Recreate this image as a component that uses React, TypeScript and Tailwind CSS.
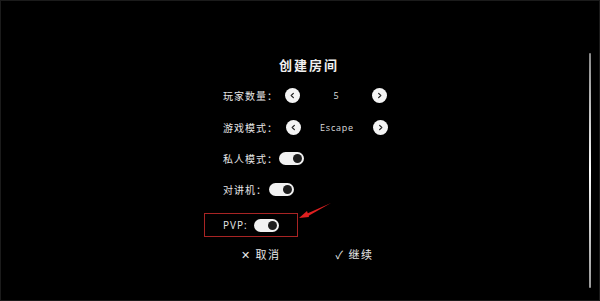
import React from "react";

const font = { fontFamily: '"Noto Sans CJK SC", "Noto Sans", sans-serif' };

function Toggle() {
  return (
    <div className="w-[25px] h-[13px] rounded-full bg-[#f2f2f2] flex items-center justify-end pr-[2px]">
      <div className="w-[9px] h-[9px] rounded-full bg-[#1e1e1e]" />
    </div>
  );
}

function Arrow({ dir }: { dir: "l" | "r" }) {
  return (
    <div className="w-[15px] h-[15px] rounded-full bg-[#f4f4f4] flex items-center justify-center">
      <svg width="7" height="7" viewBox="0 0 8 8">
        <path
          d={dir === "l" ? "M5 1.5 L2.5 4 L5 6.5" : "M3 1.5 L5.5 4 L3 6.5"}
          fill="none"
          stroke="#222"
          strokeWidth="1.4"
          strokeLinecap="round"
          strokeLinejoin="round"
        />
      </svg>
    </div>
  );
}

function Label({ children }: { children: React.ReactNode }) {
  return <span className="text-[10px] tracking-[1px] text-[#e6e6e6] leading-none">{children}</span>;
}

export default function App() {
  return (
    <div className="relative w-[600px] h-[301px] bg-black border border-[#1b1b1b] overflow-hidden" style={font}>
      <div className="flex flex-col pt-[54px] pl-[203px]">
        <div className="pl-[75px] h-[18px] flex items-center">
          <span className="text-[13px] font-bold tracking-[2px] text-[#f0f0f0] leading-none">创建房间</span>
        </div>

        <div className="flex items-center h-[15px] mt-[15px] pl-[19px]">
          <Label>玩家数量：</Label>
          <div className="ml-[7px]"><Arrow dir="l" /></div>
          <span className="w-[72px] text-center text-[9px] text-[#dcdcdc]" style={{ fontFamily: '"Open Sans", sans-serif' }}>5</span>
          <Arrow dir="r" />
        </div>

        <div className="flex items-center h-[15px] mt-[17px] pl-[19px]">
          <Label>游戏模式：</Label>
          <div className="ml-[8px]"><Arrow dir="l" /></div>
          <span className="w-[72px] text-center text-[9px] tracking-[0.8px] text-[#dcdcdc]" style={{ fontFamily: '"Open Sans", sans-serif' }}>Escape</span>
          <Arrow dir="r" />
        </div>

        <div className="flex items-center h-[15px] mt-[16px] pl-[19px]">
          <Label>私人模式：</Label>
          <div className="ml-[1px]"><Toggle /></div>
        </div>

        <div className="flex items-center h-[15px] mt-[16px] pl-[19px]">
          <Label>对讲机：</Label>
          <div className="ml-[2px]"><Toggle /></div>
        </div>

        <div className="flex items-center w-[94px] h-[24px] mt-[16px] pl-[18px] border border-[#a82424]">
          <span className="text-[10px] tracking-[1px] text-[#e6e6e6] leading-none" style={{ fontFamily: '"Open Sans", sans-serif' }}>PVP:</span>
          <div className="ml-[6px]"><Toggle /></div>
        </div>

        <div className="flex items-center h-[16px] mt-[9px] pl-[37px]">
          <span className="text-[11px] tracking-[1.5px] text-[#e8e8e8] leading-none">✕ 取消</span>
          <span className="ml-[55px] text-[11px] tracking-[1.5px] text-[#e8e8e8] leading-none">✓ 继续</span>
        </div>
      </div>

      <svg className="absolute left-[294px] top-[200px]" width="40" height="20" viewBox="0 0 40 20">
        <path d="M36 2 L10 13.5 L11.5 16 Z" fill="#e02020" />
        <path d="M4 17 L12 10 L14 16 Z" fill="#e02020" />
      </svg>

      <div className="absolute left-[588px] top-[52px] w-[2px] h-[235px] rounded-full bg-gradient-to-b from-[#888] via-white to-[#999]" />
    </div>
  );
}
